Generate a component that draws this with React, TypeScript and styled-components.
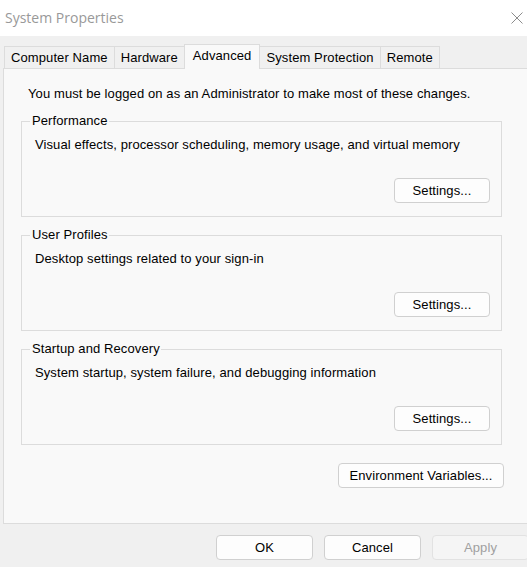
import React from 'react';
import styled, { createGlobalStyle } from 'styled-components';

const Global = createGlobalStyle`
  html, body {
    margin: 0;
    padding: 0;
    background: #f0f0f0;
    overflow: hidden;
  }
  * { box-sizing: border-box; }
`;

const Window = styled.div`
  width: 527px;
  height: 567px;
  display: flex;
  flex-direction: column;
  background: #f0f0f0;
  font-family: "Liberation Sans", Arial, sans-serif;
  font-size: 13px;
  letter-spacing: 0.1px;
  color: #000;
  overflow: hidden;
`;

const TitleBar = styled.div`
  height: 36px;
  flex-shrink: 0;
  background: #ffffff;
  display: flex;
  align-items: center;
  justify-content: space-between;
  padding: 0 4px 1px 5px;
`;

const Title = styled.span`
  font-family: "Open Sans", "Noto Sans", sans-serif;
  font-size: 14px;
  letter-spacing: 0;
  color: #999999;
`;

const CloseBtn = styled.span`
  width: 12px;
  height: 12px;
  display: flex;
`;

const Body = styled.div`
  flex: 1;
  padding: 8px 0 0 3px;
  display: flex;
  flex-direction: column;
`;

const TabStrip = styled.div`
  display: flex;
  align-items: flex-end;
  height: 24px;
  padding-left: 1px;
  position: relative;
  z-index: 1;
`;

const Tab = styled.div<{ $active?: boolean }>`
  height: ${p => (p.$active ? '25px' : '22px')};
  padding: ${p => (p.$active ? '0 8px 4px 8px' : '0 6px')};
  display: flex;
  align-items: center;
  border: 1px solid #dcdcdc;
  border-bottom: none;
  margin-left: -1px;
  background: ${p => (p.$active ? '#f9f9f9' : '#f0f0f0')};
  margin-bottom: ${p => (p.$active ? '-1px' : '0')};
  &:first-child { margin-left: 0; }
`;

const Panel = styled.div`
  width: 540px;
  height: 456px;
  background: #f9f9f9;
  border: 1px solid #dcdcdc;
  padding: 15px 0 0 17px;
  display: flex;
  flex-direction: column;
`;

const Notice = styled.div`
  line-height: 20px;
  margin: 0 0 17px 7px;
`;

const Group = styled.section`
  width: 481px;
  height: 96px;
  margin-bottom: 18px;
  padding: 0 11px 13px 13px;
  border: 1px solid #dcdcdc;
  display: flex;
  flex-direction: column;
`;

const Legend = styled.div`
  align-self: flex-start;
  margin: -9px 0 0 -5px;
  padding: 0 1px 0 2px;
  line-height: 16px;
  background: #f9f9f9;
`;

const GroupText = styled.div`
  line-height: 18px;
  margin-top: 7px;
  flex: 1;
`;

const GroupFoot = styled.div`
  display: flex;
  justify-content: flex-end;
`;

const Button = styled.button<{ $w?: number; $disabled?: boolean }>`
  width: ${p => p.$w ?? 96}px;
  height: 25px;
  font-family: "Liberation Sans", Arial, sans-serif;
  font-size: 13px;
  letter-spacing: 0.1px;
  color: ${p => (p.$disabled ? '#a0a0a0' : '#000')};
  background: ${p => (p.$disabled ? '#f5f5f5' : '#fdfdfd')};
  border: 1px solid ${p => (p.$disabled ? '#e2e2e2' : '#d0d0d0')};
  border-radius: 4px;
  padding: 0;
  flex-shrink: 0;
`;

const EnvRow = styled.div`
  display: flex;
  justify-content: flex-end;
  width: 483px;
`;

const Footer = styled.div`
  display: flex;
  gap: 11px;
  padding: 11px 0 0 213px;
`;

const groups = [
  { title: 'Performance', text: 'Visual effects, processor scheduling, memory usage, and virtual memory' },
  { title: 'User Profiles', text: 'Desktop settings related to your sign-in' },
  { title: 'Startup and Recovery', text: 'System startup, system failure, and debugging information' },
];

const tabs = ['Computer Name', 'Hardware', 'Advanced', 'System Protection', 'Remote'];

export default function App() {
  return (
    <>
      <Global />
      <Window>
        <TitleBar>
          <Title>System Properties</Title>
          <CloseBtn>
            <svg width="12" height="12" viewBox="0 0 12 12">
              <path d="M0.5 0.5 L11.5 11.5 M11.5 0.5 L0.5 11.5" stroke="#8c8c8c" strokeWidth="1" />
            </svg>
          </CloseBtn>
        </TitleBar>
        <Body>
          <TabStrip>
            {tabs.map(t => (
              <Tab key={t} $active={t === 'Advanced'}>{t}</Tab>
            ))}
          </TabStrip>
          <Panel>
            <Notice>You must be logged on as an Administrator to make most of these changes.</Notice>
            {groups.map(g => (
              <Group key={g.title}>
                <Legend>{g.title}</Legend>
                <GroupText>{g.text}</GroupText>
                <GroupFoot>
                  <Button>Settings...</Button>
                </GroupFoot>
              </Group>
            ))}
            <EnvRow>
              <Button $w={166}>Environment Variables...</Button>
            </EnvRow>
          </Panel>
          <Footer>
            <Button $w={97}>OK</Button>
            <Button $w={97}>Cancel</Button>
            <Button $w={97} $disabled>Apply</Button>
          </Footer>
        </Body>
      </Window>
    </>
  );
}
